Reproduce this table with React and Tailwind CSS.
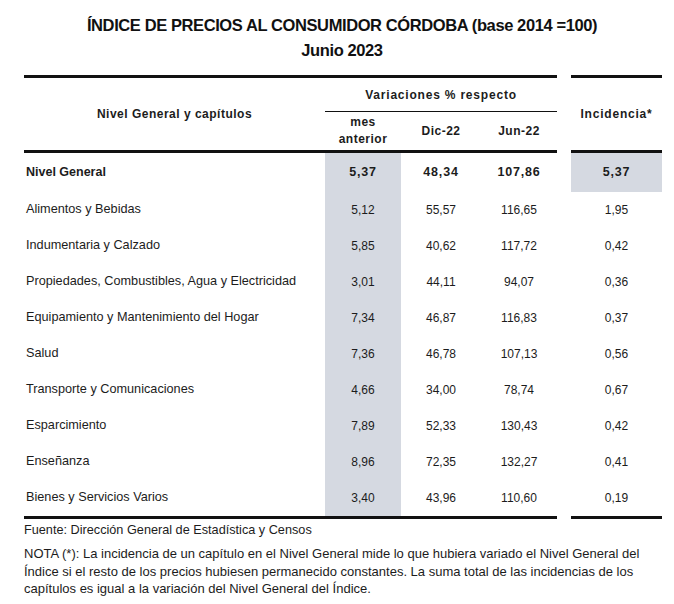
const rows = [
  ['Alimentos y Bebidas', '5,12', '55,57', '116,65', '1,95'],
  ['Indumentaria y Calzado', '5,85', '40,62', '117,72', '0,42'],
  ['Propiedades, Combustibles, Agua y Electricidad', '3,01', '44,11', '94,07', '0,36'],
  ['Equipamiento y Mantenimiento del Hogar', '7,34', '46,87', '116,83', '0,37'],
  ['Salud', '7,36', '46,78', '107,13', '0,56'],
  ['Transporte y Comunicaciones', '4,66', '34,00', '78,74', '0,67'],
  ['Esparcimiento', '7,89', '52,33', '130,43', '0,42'],
  ['Enseñanza', '8,96', '72,35', '132,27', '0,41'],
  ['Bienes y Servicios Varios', '3,40', '43,96', '110,60', '0,19'],
];

const Rule = () => (
  <div className="flex">
    <div className="w-[533px] h-[3px] bg-[#111]" />
    <div className="w-[14px]" />
    <div className="w-[91px] h-[3px] bg-[#111]" />
  </div>
);

const DataRow = ({ label, mes, dic, jun, inc, bold }) => {
  const num = bold ? 'text-[12.5px] tracking-[0.8px]' : 'text-[12px]';
  return (
    <div className={`flex items-stretch ${bold ? 'h-[39px] font-bold' : 'h-[36px]'}`}>
      <div className={`w-[301px] flex items-center pl-[2px] ${bold ? 'text-[12.5px]' : 'text-[12.7px]'}`}>{label}</div>
      <div className={`w-[76px] flex items-center justify-center bg-[#d5d9e1] ${num}`}>{mes}</div>
      <div className={`w-[80px] flex items-center justify-center ${num}`}>{dic}</div>
      <div className={`w-[76px] flex items-center justify-center ${num}`}>{jun}</div>
      <div className="w-[14px]" />
      <div className={`w-[91px] flex items-center justify-center ${num} ${bold ? 'bg-[#d5d9e1]' : ''}`}>{inc}</div>
    </div>
  );
};

export default function App() {
  return (
    <div className="w-[674px] h-[604px] bg-white text-[#1c1c1c] font-['Liberation_Sans',Arial,sans-serif] overflow-hidden">
      <div className="pt-[13px] pl-[10px] text-center font-bold text-[16.5px] leading-[25px] tracking-[-0.4px] text-[#111]">
        <div>ÍNDICE DE PRECIOS AL CONSUMIDOR CÓRDOBA (base 2014 =100)</div>
        <div>Junio 2023</div>
      </div>

      <div className="ml-[24px] mt-[12px]">
        <Rule />
        <div className="flex h-[72px] font-bold text-[12px] tracking-[0.5px]">
          <div className="w-[301px] flex items-center justify-center">Nivel General y capítulos</div>
          <div className="w-[232px] flex flex-col">
            <div className="h-[33px] flex items-center justify-center tracking-[0.8px]">Variaciones % respecto</div>
            <div className="h-px bg-[#111]" />
            <div className="flex flex-1">
              <div className="w-[76px] flex flex-col items-center justify-center leading-[17px]">
                <span>mes</span>
                <span>anterior</span>
              </div>
              <div className="w-[80px] flex items-center justify-center">Dic-22</div>
              <div className="w-[76px] flex items-center justify-center">Jun-22</div>
            </div>
          </div>
          <div className="w-[14px]" />
          <div className="w-[91px] flex items-center justify-center tracking-[0.8px]">Incidencia*</div>
        </div>
        <Rule />
        <DataRow label="Nivel General" mes="5,37" dic="48,34" jun="107,86" inc="5,37" bold />
        {rows.map(([label, mes, dic, jun, inc]) => (
          <DataRow key={label} label={label} mes={mes} dic={dic} jun={jun} inc={inc} />
        ))}
        <Rule />

        <div className="mt-[3px] text-[12.7px] leading-[17px]">Fuente: Dirección General de Estadística y Censos</div>
        <div className="mt-[6px] text-[13px] leading-[17.5px] whitespace-nowrap">
          NOTA (*): La incidencia de un capítulo en el Nivel General mide lo que hubiera variado el Nivel General del
          <br />
          Índice si el resto de los precios hubiesen permanecido constantes. La suma total de las incidencias de los
          <br />
          capítulos es igual a la variación del Nivel General del Índice.
        </div>
      </div>
    </div>
  );
}
